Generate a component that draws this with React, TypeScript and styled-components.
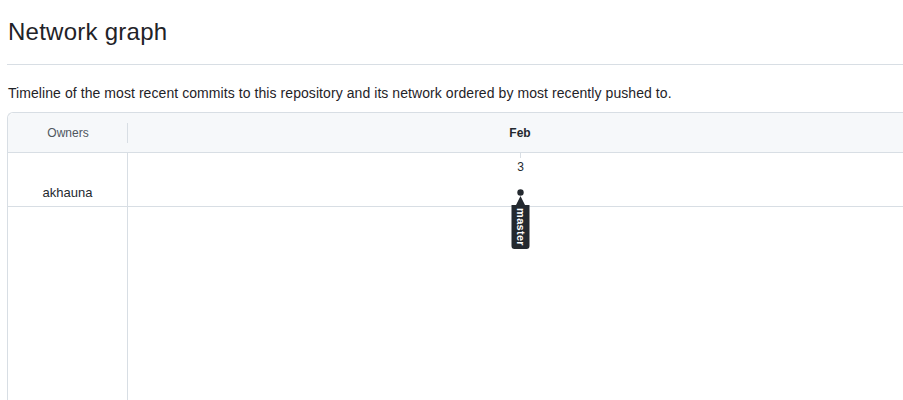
import React from "react";
import styled, { createGlobalStyle } from "styled-components";

const Global = createGlobalStyle`
  html, body { margin: 0; padding: 0; overflow: hidden; background: #ffffff; }
  body {
    font-family: "Liberation Sans", Arial, sans-serif;
    color: #1f2328;
  }
`;

const Page = styled.div`
  padding-left: 7px;
  width: 930px;
`;

const Heading = styled.h2`
  margin: 17px 0 0 0;
  padding-bottom: 17px;
  font-size: 24px;
  line-height: 30px;
  font-weight: 400;
  letter-spacing: 0.25px;
  color: #1f2328;
  border-bottom: 1px solid #d8dee4;
  padding-left: 1px;
`;

const Description = styled.p`
  margin: 18px 0 8px 1px;
  font-size: 14px;
  line-height: 21px;
  letter-spacing: 0.07px;
  color: #1f2328;
`;

const Table = styled.div`
  border-left: 1px solid #d8dee4;
  border-top: 1px solid #d8dee4;
  border-top-left-radius: 6px;
  height: 300px;
  display: flex;
  flex-direction: column;
`;

const HeaderRow = styled.div`
  display: flex;
  height: 39px;
  background: #f6f8fa;
  border-bottom: 1px solid #d8dee4;
  border-top-left-radius: 6px;
  font-size: 12px;
`;

const OwnerHead = styled.div`
  position: relative;
  width: 120px;
  display: flex;
  align-items: center;
  justify-content: center;
  color: #4f565e;
  &::after {
    content: "";
    position: absolute;
    right: 0;
    top: 10px;
    height: 20px;
    width: 1px;
    background: #d8dee4;
  }
`;

const DateHead = styled.div`
  width: 784px;
  display: flex;
  align-items: center;
  justify-content: center;
  font-weight: 700;
  color: #24292f;
`;

const Body = styled.div`
  display: flex;
  flex: 1;
`;

const OwnersCol = styled.div`
  width: 119px;
  border-right: 1px solid #d8dee4;
`;

const OwnerRow = styled.div`
  height: 48px;
  padding-bottom: 5px;
  border-bottom: 1px solid #d8dee4;
  display: flex;
  align-items: flex-end;
  justify-content: center;
  font-size: 13px;
  line-height: 16px;
  color: #24292f;
`;

const GraphCol = styled.div`
  position: relative;
  flex: 1;
`;

const GraphRow = styled.div`
  height: 53px;
  border-bottom: 1px solid #d8dee4;
`;

const GraphSvg = styled.svg`
  position: absolute;
  left: 0;
  top: 0;
  overflow: visible;
`;

export default function App() {
  const x = 392;
  return (
    <>
      <Global />
      <Page>
        <Heading>Network graph</Heading>
        <Description>
          Timeline of the most recent commits to this repository and its network ordered by most recently pushed to.
        </Description>
        <Table>
          <HeaderRow>
            <OwnerHead>Owners</OwnerHead>
            <DateHead>Feb</DateHead>
          </HeaderRow>
          <Body>
            <OwnersCol>
              <OwnerRow>akhauna</OwnerRow>
            </OwnersCol>
            <GraphCol>
              <GraphRow />
              <GraphSvg width="784" height="120" viewBox="0 0 784 120">
                <line x1={x + 0.5} y1={0} x2={x + 0.5} y2={5} stroke="#d8dee4" strokeWidth={1} />
                <text
                  x={x + 0.5}
                  y={18}
                  textAnchor="middle"
                  fontSize="12"
                  fontFamily="Liberation Sans, Arial, sans-serif"
                  fill="#24292f"
                >
                  3
                </text>
                <circle cx={x + 0.5} cy={39.5} r={3.2} fill="#24292f" />
                <path
                  d={`M ${x + 0.5} 43 L ${x + 5} 52 L ${x + 9.5} 52 L ${x + 9.5} 93 Q ${x + 9.5} 96 ${x + 6.5} 96 L ${x - 5.5} 96 Q ${x - 8.5} 96 ${x - 8.5} 93 L ${x - 8.5} 52 L ${x - 4} 52 Z`}
                  fill="#24292f"
                />
                <text
                  x={0}
                  y={0}
                  transform={`translate(${x - 3.5} 74) rotate(90)`}
                  textAnchor="middle"
                  fontSize="11"
                  fontWeight="700"
                  letterSpacing="0.3"
                  fontFamily="Liberation Sans, Arial, sans-serif"
                  fill="#ffffff"
                >
                  master
                </text>
              </GraphSvg>
            </GraphCol>
          </Body>
        </Table>
      </Page>
    </>
  );
}
